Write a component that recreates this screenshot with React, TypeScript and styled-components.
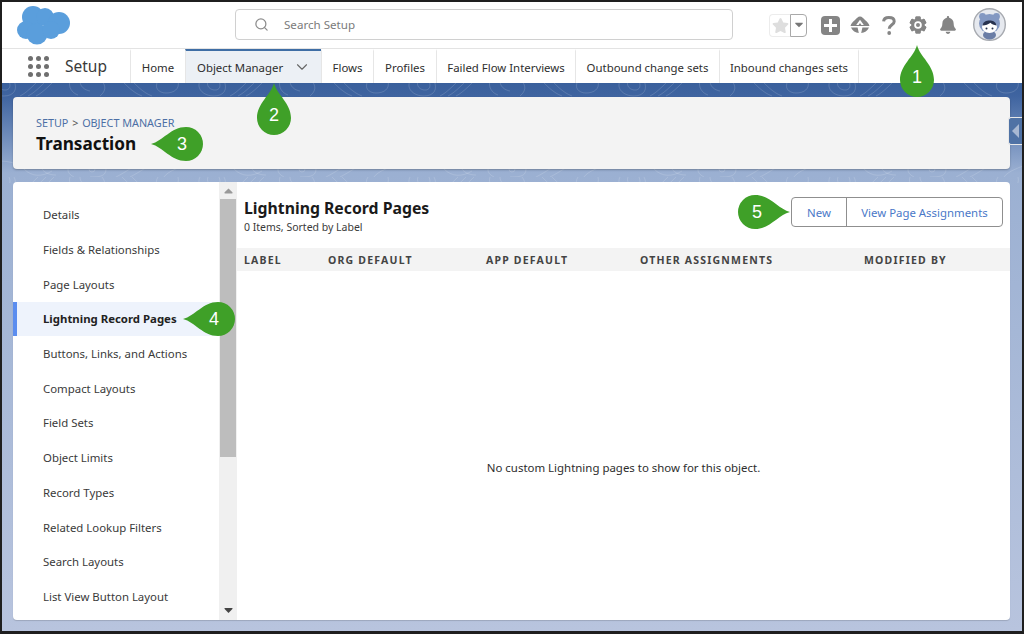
import React from "react";
import styled, { createGlobalStyle } from "styled-components";
import { Search, ChevronDown } from "lucide-react";
import { FaBell, FaStar } from "react-icons/fa";
import { TiArrowSortedDown, TiArrowSortedUp } from "react-icons/ti";

const GlobalStyle = createGlobalStyle`
  html, body {
    margin: 0;
    padding: 0;
    background: #fff;
    font-family: "Noto Sans", "Open Sans", Arial, sans-serif;
  }
  * { box-sizing: border-box; }
`;

const tabs = [
  { label: "Home", width: 55 },
  { label: "Object Manager", width: 136, active: true },
  { label: "Flows", width: 52 },
  { label: "Profiles", width: 63 },
  { label: "Failed Flow Interviews", width: 139 },
  { label: "Outbound change sets", width: 144 },
  { label: "Inbound changes sets", width: 140 },
];

const menu = [
  "Details",
  "Fields & Relationships",
  "Page Layouts",
  "Lightning Record Pages",
  "Buttons, Links, and Actions",
  "Compact Layouts",
  "Field Sets",
  "Object Limits",
  "Record Types",
  "Related Lookup Filters",
  "Search Layouts",
  "List View Button Layout",
];

const columns = [
  { label: "LABEL", width: 84 },
  { label: "ORG DEFAULT", width: 158 },
  { label: "APP DEFAULT", width: 154 },
  { label: "OTHER ASSIGNMENTS", width: 224 },
  { label: "MODIFIED BY", width: 130 },
];

type Direction = "up" | "left" | "right";

const dropPaths: Record<Direction, string> = {
  up: "M17 0C20 12 34 20 34 35A17 17 0 0 1 0 35C0 20 14 12 17 0Z",
  left: "M0 17C12 14 20 0 35 0A17 17 0 0 1 35 34C20 34 12 20 0 17Z",
  right: "M52 17C40 14 32 0 17 0A17 17 0 0 0 17 34C32 34 40 20 52 17Z",
};

const Callout: React.FC<{ n: number; dir: Direction; x: number; y: number }> = ({ n, dir, x, y }) => {
  const w = dir === "up" ? 34 : 52;
  const h = dir === "up" ? 52 : 34;
  return (
    <Drop $x={x} $y={y} $w={w} $h={h}>
      <svg width={w} height={h} viewBox={`0 0 ${w} ${h}`}>
        <path d={dropPaths[dir]} fill="#3fa028" />
      </svg>
      <DropNumber $dir={dir}>{n}</DropNumber>
    </Drop>
  );
};

const Cloud = () => (
  <svg width="54" height="40" viewBox="0 0 54 40">
    <g fill="#5a9edc">
      <circle cx="17" cy="12" r="11" />
      <circle cx="29" cy="12" r="9" />
      <circle cx="43" cy="18" r="11" />
      <circle cx="10" cy="25" r="9" />
      <circle cx="21" cy="29" r="10.5" />
      <circle cx="35" cy="25" r="9" />
    </g>
  </svg>
);

const Guidance = () => (
  <svg width="20" height="20" viewBox="0 0 20 20">
    <path
      fill="#858585"
      d="M10 1.5C12 1.5 13.5 3.5 15 5 17 6.5 19 8.5 19.5 11H.5C1 8.5 3 6.5 5 5 6.5 3.5 8 1.5 10 1.5ZM10 4.8 6.2 10H8.6L10 8 11.4 10H13.8ZM1 12.4H7.6L8.8 18C5.5 17.6 2.5 15.8 1 12.4ZM19 12.4H12.4L11.2 18C14.5 17.6 17.5 15.8 19 12.4Z"
    />
  </svg>
);

const Question = () => (
  <svg width="14" height="19" viewBox="0 0 14 19" fill="none">
    <path d="M1.6 5.4C1.8 2.8 3.8 1.5 6.8 1.5 10 1.5 12.2 3 12.2 5.4 12.2 8.8 7.2 8.6 7.2 12.8" stroke="#858585" strokeWidth="3" />
    <circle cx="7.2" cy="17" r="1.9" fill="#858585" />
  </svg>
);

const Gear = () => (
  <svg width="18" height="18" viewBox="0 0 18 18">
    <g fill="#858585">
      {[0, 60, 120, 180, 240, 300].map((a) => (
        <rect key={a} x="6.4" y="0.5" width="5.2" height="17" rx="1" transform={`rotate(${a} 9 9)`} />
      ))}
      <circle cx="9" cy="9" r="6.8" />
    </g>
    <circle cx="9" cy="9" r="3.8" fill="#fff" />
    <circle cx="9" cy="9" r="2" fill="#858585" />
  </svg>
);

const Avatar = () => (
  <svg width="33" height="33" viewBox="0 0 33 33">
    <circle cx="16.5" cy="16.5" r="15.8" fill="#e6e9ef" stroke="#a7aab0" strokeWidth="1.4" />
    <circle cx="9.5" cy="8.5" r="3.4" fill="#8398c2" />
    <circle cx="23.5" cy="8.5" r="3.4" fill="#8398c2" />
    <ellipse cx="16.5" cy="15.5" rx="10.5" ry="9.5" fill="#8398c2" />
    <ellipse cx="16.5" cy="27" rx="6.5" ry="4.5" fill="#6a7da6" />
    <ellipse cx="16.5" cy="19" rx="7.5" ry="6" fill="#fff" />
    <path d="M9.5 17.5C10 13.5 13.5 12.5 16.5 12.5S23 13.5 23.5 17.5C21 17.2 18.5 16.3 17.5 14.8 15.5 16.4 12.5 17.4 9.5 17.5Z" fill="#27324f" />
    <circle cx="13.5" cy="20.5" r="1" fill="#27324f" />
    <circle cx="19.5" cy="20.5" r="1" fill="#27324f" />
  </svg>
);

const Launcher = () => (
  <LauncherGrid>
    {Array.from({ length: 9 }).map((_, i) => (
      <LauncherDot key={i} />
    ))}
  </LauncherGrid>
);

const Contours = () => (
  <ContourSvg width="100%" height="100%">
    <defs>
      <pattern id="contour" width="210" height="96" patternUnits="userSpaceOnUse" x="-20" y="-2">
        <g fill="none" stroke="#fff" strokeOpacity="0.14" strokeWidth="1">
          <path d="M8 0C4 8 12 15 22 15S36 8 32 0M16 0C14 5 18 9 23 9S29 5 27 0" />
          <path d="M56 0C50 6 44 12 38 15M64 0C58 6 52 12 46 15M72 0C66 6 60 12 54 15" />
          <path d="M88 0C86 6 90 12 96 14M98 0C98 5 102 9 108 10M120 0C124 5 124 10 118 15" />
          <path d="M140 0C146 6 152 12 160 15M150 0C156 6 162 12 170 15M176 0C172 6 176 12 184 12S198 8 196 0" />
          <path d="M0 82C18 78 34 80 42 88S60 96 70 90M60 80C56 86 62 94 74 94M92 82C84 86 84 92 92 96M98 80C106 76 124 80 124 88S116 96 108 96" />
          <circle cx="110" cy="88" r="3" />
          <path d="M134 96C146 90 152 84 164 80M148 96C160 90 166 84 178 80M182 96C186 90 198 86 210 82" />
        </g>
      </pattern>
    </defs>
    <rect width="100%" height="100" fill="url(#contour)" />
  </ContourSvg>
);

export default function App() {
  return (
    <Frame>
      <GlobalStyle />
      <Header>
        <Logo>
          <Cloud />
        </Logo>
        <SearchBox>
          <Search size={15} color="#8c8c8c" />
          <SearchLabel>Search Setup</SearchLabel>
        </SearchBox>
        <Tools>
          <FavoriteGroup>
            <FavoriteStar>
              <FaStar size={17} color="#dedede" />
            </FavoriteStar>
            <FavoriteMenu>
              <TiArrowSortedDown size={14} color="#777" />
            </FavoriteMenu>
          </FavoriteGroup>
          <IconSlot>
            <PlusButton />
          </IconSlot>
          <IconSlot>
            <Guidance />
          </IconSlot>
          <IconSlot>
            <Question />
          </IconSlot>
          <IconSlot>
            <Gear />
          </IconSlot>
          <IconSlot>
            <FaBell size={18} color="#858585" />
          </IconSlot>
          <AvatarSlot>
            <Avatar />
          </AvatarSlot>
        </Tools>
      </Header>
      <TabBar>
        <AppName>
          <Launcher />
          <AppTitle>Setup</AppTitle>
        </AppName>
        {tabs.map((t) => (
          <Tab key={t.label} $width={t.width} $active={t.active}>
            {t.label}
            {t.active && <ChevronDown size={18} strokeWidth={1.5} color="#666" />}
          </Tab>
        ))}
      </TabBar>
      <Body>
        <Contours />
        <HighlightCard>
          <Breadcrumb>
            <a>SETUP</a> <span>&gt;</span> <a>OBJECT MANAGER</a>
          </Breadcrumb>
          <PageTitle>Transaction</PageTitle>
        </HighlightCard>
        <MainCard>
          <Sidebar>
            <Menu>
              {menu.map((m) => (
                <MenuItem key={m} $active={m === "Lightning Record Pages"}>
                  {m}
                </MenuItem>
              ))}
            </Menu>
            <Scrollbar>
              <TiArrowSortedUp size={15} color="#999" />
              <Thumb />
              <TiArrowSortedDown size={15} color="#444" />
            </Scrollbar>
          </Sidebar>
          <Content>
            <ContentHead>
              <div>
                <ContentTitle>Lightning Record Pages</ContentTitle>
                <ContentSub>0 Items, Sorted by Label</ContentSub>
              </div>
              <ButtonGroup>
                <GroupButton $width={54}>New</GroupButton>
                <GroupButton $width={156}>View Page Assignments</GroupButton>
              </ButtonGroup>
            </ContentHead>
            <TableHead>
              {columns.map((c) => (
                <HeadCell key={c.label} $width={c.width}>
                  {c.label}
                </HeadCell>
              ))}
            </TableHead>
            <Empty>No custom Lightning pages to show for this object.</Empty>
          </Content>
        </MainCard>
        <SideHandle>
          <HandleArrow />
        </SideHandle>
      </Body>
      <Callout n={1} dir="up" x={900} y={45} />
      <Callout n={2} dir="up" x={257} y={83} />
      <Callout n={3} dir="left" x={151} y={127} />
      <Callout n={4} dir="left" x={183} y={302} />
      <Callout n={5} dir="right" x={738} y={195} />
    </Frame>
  );
}

const Frame = styled.div`
  position: relative;
  width: 1024px;
  height: 634px;
  border: 2px solid #1f1f1f;
  border-bottom-width: 3px;
  display: flex;
  flex-direction: column;
  overflow: hidden;
  background: #fff;
`;

const Header = styled.header`
  height: 47px;
  flex: none;
  display: flex;
  align-items: center;
  background: #fff;
  border-bottom: 1px solid #e3e3e3;
`;

const Logo = styled.div`
  width: 233px;
  padding-left: 14px;
  display: flex;
  align-items: center;
`;

const SearchBox = styled.div`
  width: 498px;
  height: 31px;
  margin-top: -1px;
  display: flex;
  align-items: center;
  gap: 15px;
  padding-left: 18px;
  border: 1px solid #d0d0d0;
  border-radius: 4px;
`;

const SearchLabel = styled.span`
  font-size: 11.6px;
  color: #7b7b7b;
`;

const Tools = styled.div`
  display: flex;
  align-items: center;
  margin-left: 36px;
  height: 100%;
  svg { flex: none; }
`;

const IconSlot = styled.div`
  width: 29.4px;
  flex: none;
  display: flex;
  align-items: center;
  justify-content: center;
`;

const FavoriteGroup = styled.div`
  display: flex;
  width: 38px;
  height: 23px;
  margin-right: 8.5px;
`;

const FavoriteStar = styled.div`
  flex: 1;
  display: flex;
  align-items: center;
  justify-content: center;
  border: 1px solid #ececec;
  border-right: none;
  border-radius: 4px 0 0 4px;
`;

const FavoriteMenu = styled.div`
  width: 17px;
  display: flex;
  align-items: center;
  justify-content: center;
  border: 1px solid #a9a9a9;
  border-radius: 0 4px 4px 0;
`;

const PlusButton = styled.div`
  position: relative;
  width: 19px;
  height: 19px;
  border-radius: 4px;
  background: #858585;
  &::before, &::after {
    content: "";
    position: absolute;
    background: #fff;
  }
  &::before { left: 3px; right: 3px; top: 8px; height: 3px; }
  &::after { top: 3px; bottom: 3px; left: 8px; width: 3px; }
`;

const AvatarSlot = styled.div`
  margin: -2px 0 0 10.5px;
  display: flex;
`;

const TabBar = styled.nav`
  height: 34px;
  flex: none;
  display: flex;
  background: #fff;
`;

const AppName = styled.div`
  width: 128px;
  flex: none;
  display: flex;
  align-items: center;
  padding-left: 26px;
  gap: 16px;
`;

const LauncherGrid = styled.div`
  display: grid;
  grid-template-columns: repeat(3, 5px);
  gap: 3px;
  width: 21px;
`;

const LauncherDot = styled.span`
  width: 5px;
  height: 5px;
  border-radius: 50%;
  background: #6f6f6f;
`;

const AppTitle = styled.span`
  font-size: 15.5px;
  color: #3a3a3a;
`;

const Tab = styled.div<{ $width: number; $active?: boolean }>`
  width: ${(p) => p.$width}px;
  flex: none;
  display: flex;
  align-items: center;
  justify-content: ${(p) => (p.$active ? "space-between" : "center")};
  padding: ${(p) => (p.$active ? "0 10px 0 11px" : "0")};
  font-size: 11.4px;
  white-space: nowrap;
  color: #2e2e2e;
  border-left: 1px solid #e6e6e6;
  background: ${(p) => (p.$active ? "#ecf0f5" : "#fff")};
  border-top: 2px solid ${(p) => (p.$active ? "#3f6ea5" : "transparent")};
  &:last-child { border-right: 1px solid #e6e6e6; }
`;

const Body = styled.main`
  position: relative;
  flex: 1;
  min-height: 0;
  display: flex;
  flex-direction: column;
  gap: 13px;
  padding: 14px 12px 11px 11px;
  background: linear-gradient(180deg, #3a609c 0, #3f64a0 13px, #9bb0d2 90px, #b8c4de 100%);
`;

const ContourSvg = styled.svg`
  position: absolute;
  top: 0;
  left: 0;
`;

const HighlightCard = styled.section`
  position: relative;
  height: 72px;
  flex: none;
  padding: 18px 23px 0;
  background: #f3f3f3;
  border-radius: 4px;
  box-shadow: 0 1px 2px rgba(0, 0, 0, 0.25);
`;

const Breadcrumb = styled.div`
  font-size: 10.8px;
  line-height: 15px;
  color: #4c6fa5;
  span { color: #555; margin: 0 1px; }
`;

const PageTitle = styled.h1`
  margin: 3px 0 0;
  font-size: 17.2px;
  line-height: 22px;
  font-weight: 700;
  color: #111;
`;

const MainCard = styled.section`
  position: relative;
  flex: 1;
  min-height: 0;
  display: flex;
  background: #fff;
  border-radius: 4px;
  overflow: hidden;
  box-shadow: 0 1px 1px rgba(0, 0, 0, 0.15);
`;

const Sidebar = styled.aside`
  width: 224px;
  flex: none;
  display: flex;
`;

const Menu = styled.ul`
  flex: 1;
  list-style: none;
  margin: 0;
  padding: 15.5px 0 0;
`;

const MenuItem = styled.li<{ $active?: boolean }>`
  height: 34.7px;
  display: flex;
  align-items: center;
  padding-left: ${(p) => (p.$active ? "26px" : "30px")};
  font-size: 11.4px;
  white-space: nowrap;
  font-weight: ${(p) => (p.$active ? 700 : 400)};
  color: ${(p) => (p.$active ? "#222" : "#3a3a3a")};
  background: ${(p) => (p.$active ? "#eef3fc" : "transparent")};
  border-left: ${(p) => (p.$active ? "4px solid #5b8def" : "none")};
`;

const Scrollbar = styled.div`
  width: 18px;
  flex: none;
  display: flex;
  flex-direction: column;
  align-items: center;
  justify-content: space-between;
  padding: 2px 0;
  background: #f0f0f0;
`;

const Thumb = styled.div`
  width: 16px;
  height: 258px;
  margin-bottom: auto;
  background: #bdbdbd;
`;

const Content = styled.div`
  flex: 1;
  min-width: 0;
  display: flex;
  flex-direction: column;
`;

const ContentHead = styled.div`
  height: 66px;
  flex: none;
  display: flex;
  justify-content: space-between;
  padding: 15px 7px 0;
`;

const ContentTitle = styled.h2`
  margin: 0;
  font-size: 15.8px;
  line-height: 22px;
  font-weight: 700;
  color: #1a1a1a;
`;

const ContentSub = styled.div`
  font-size: 10.5px;
  line-height: 15px;
  margin-top: 1px;
  color: #3a3a3a;
`;

const ButtonGroup = styled.div`
  display: flex;
  height: 30px;
  border: 1px solid #8f8f8f;
  border-radius: 4px;
  background: #fff;
`;

const GroupButton = styled.button<{ $width: number }>`
  width: ${(p) => p.$width}px;
  height: 100%;
  padding: 0;
  border: none;
  background: none;
  font: inherit;
  font-size: 11.4px;
  color: #4a78c8;
  & + & { border-left: 1px solid #8f8f8f; }
`;

const TableHead = styled.div`
  height: 23px;
  flex: none;
  display: flex;
  align-items: center;
  padding-left: 7px;
  background: #f3f3f3;
`;

const HeadCell = styled.div<{ $width: number }>`
  width: ${(p) => p.$width}px;
  flex: none;
  font-size: 10.5px;
  font-weight: 700;
  letter-spacing: 1.2px;
  white-space: nowrap;
  color: #444;
`;

const Empty = styled.div`
  flex: 1;
  display: flex;
  align-items: center;
  justify-content: center;
  padding-top: 44px;
  font-size: 11.45px;
  color: #2e2e2e;
`;

const SideHandle = styled.div`
  position: absolute;
  top: 34px;
  right: 0;
  width: 14px;
  height: 28px;
  display: flex;
  align-items: center;
  justify-content: center;
  background: #4f72a5;
  border: 1px solid #e8e8e8;
  border-right: none;
  border-radius: 3px 0 0 3px;
`;

const HandleArrow = styled.span`
  width: 0;
  height: 0;
  border-top: 7px solid transparent;
  border-bottom: 7px solid transparent;
  border-right: 7px solid #a8b8d2;
`;

const Drop = styled.div<{ $x: number; $y: number; $w: number; $h: number }>`
  position: absolute;
  left: ${(p) => p.$x - 2}px;
  top: ${(p) => p.$y - 2}px;
  width: ${(p) => p.$w}px;
  height: ${(p) => p.$h}px;
  svg { display: block; }
`;

const DropNumber = styled.span<{ $dir: Direction }>`
  position: absolute;
  display: flex;
  align-items: center;
  justify-content: center;
  width: 34px;
  height: 34px;
  font-family: "Liberation Sans", Arial, sans-serif;
  font-size: 18px;
  color: #fff;
  top: ${(p) => (p.$dir === "up" ? "15px" : "0")};
  left: ${(p) => (p.$dir === "left" ? "14px" : p.$dir === "right" ? "2px" : "0")};
`;
